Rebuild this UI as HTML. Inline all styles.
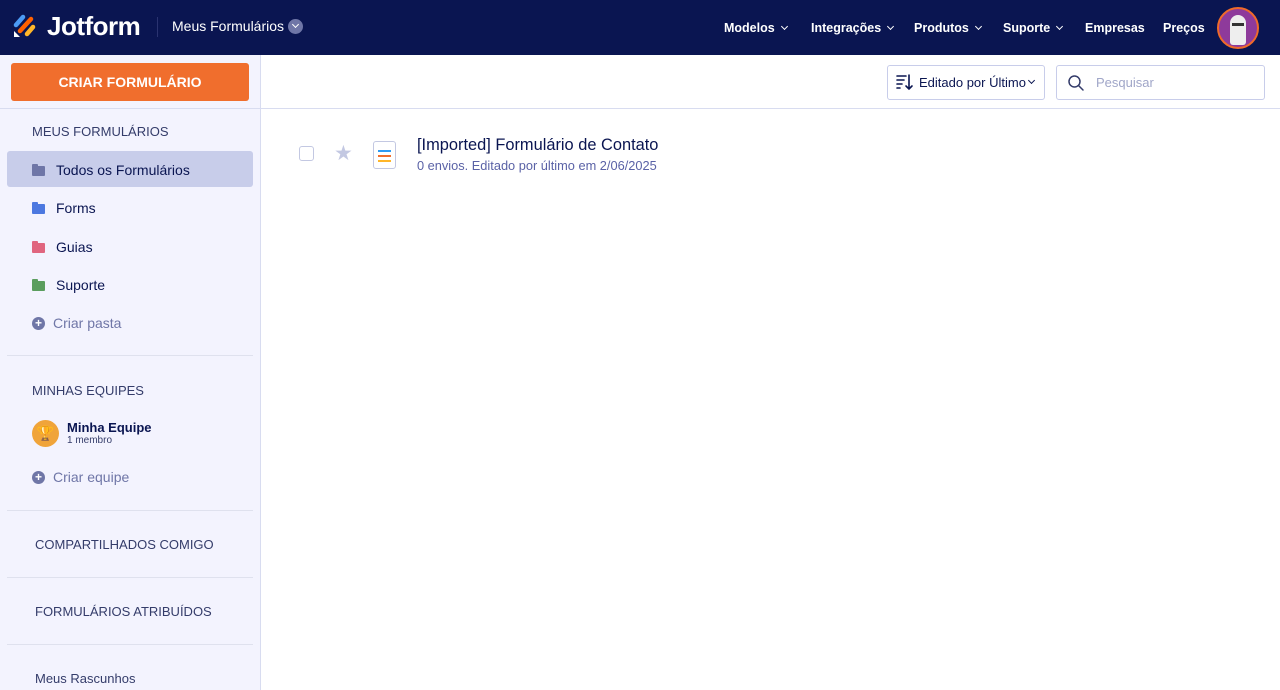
<!DOCTYPE html>
<html><head><meta charset="utf-8"><style>
*{box-sizing:border-box;margin:0;padding:0}
body{width:1280px;height:690px;overflow:hidden;font-family:"Liberation Sans",sans-serif;background:#fff;position:relative}
.hdr{position:absolute;left:0;top:0;width:1280px;height:55px;background:#0a1551}
.abs{position:absolute;white-space:nowrap}
.nav{color:#fff;font-size:12.5px;font-weight:bold;top:21px}
.chev{display:inline-block;width:5px;height:5px;border-right:1.5px solid #fff;border-bottom:1.5px solid #fff;transform:rotate(45deg);margin-left:7px;position:relative;top:-3px}
.side{position:absolute;left:0;top:55px;width:261px;height:635px;background:#f3f3fe;border-right:1px solid #d8dcf0}
.sec{color:#343c6a;font-size:13px}
.item{font-size:14px;color:#0a1551}
.fold{position:absolute;width:13px;height:10px;border-radius:1px}
.fold:before{content:"";position:absolute;left:0;top:-2px;width:6px;height:3px;background:inherit;border-radius:1px 1px 0 0}
.hr{position:absolute;left:7px;width:246px;height:1px;background:#dfe1ee}
.plus{position:absolute;width:13px;height:13px;border-radius:50%;background:#6f76a7;color:#fff;font-size:12px;line-height:13px;text-align:center;font-weight:bold}
</style></head><body>
<div class="hdr"></div>
<svg class="abs" style="left:13px;top:14px" width="24" height="24" viewBox="0 0 24 24">
<line x1="3" y1="11" x2="10" y2="3" stroke="#4c9bf5" stroke-width="4.5" stroke-linecap="round"/>
<line x1="7" y1="17" x2="18" y2="5" stroke="#ff6100" stroke-width="4.5" stroke-linecap="round"/>
<line x1="14" y1="20" x2="20" y2="13" stroke="#ffb629" stroke-width="4.5" stroke-linecap="round"/>
<path d="M1 17 L1 23 L7 23 Z" fill="#fff"/>
</svg>
<div class="abs" style="left:47px;top:11px;color:#fff;font-size:26px;font-weight:bold;letter-spacing:-0.5px">Jotform</div>
<div class="abs" style="left:157px;top:17px;width:1px;height:20px;background:#2a3370"></div>
<div class="abs" style="left:172px;top:18px;color:#fff;font-size:14px">Meus Formulários</div>
<div class="abs" style="left:288px;top:19px;width:15px;height:15px;border-radius:50%;background:#6f76a7"><span class="chev" style="position:absolute;left:5px;top:3px;width:5px;height:5px;margin:0;border-color:#fff"></span></div>
<div class="abs nav" style="left:724px">Modelos<span class="chev"></span></div>
<div class="abs nav" style="left:811px">Integrações<span class="chev"></span></div>
<div class="abs nav" style="left:914px">Produtos<span class="chev"></span></div>
<div class="abs nav" style="left:1003px">Suporte<span class="chev"></span></div>
<div class="abs nav" style="left:1085px">Empresas</div>
<div class="abs nav" style="left:1163px">Preços</div>
<div class="abs" style="left:1217px;top:7px;width:42px;height:42px;border-radius:50%;background:#8e3a9b;border:2px solid #f06a2a;overflow:hidden">
<div style="position:absolute;left:11px;top:6px;width:16px;height:30px;background:#eee;border-radius:8px 8px 3px 3px"></div>
<div style="position:absolute;left:13px;top:14px;width:12px;height:3px;background:#333"></div></div>

<div class="side"></div>
<div class="abs" style="left:11px;top:63px;width:238px;height:38px;background:#f06e2d;border-radius:3px;color:#fff;font-size:14px;font-weight:bold;text-align:center;line-height:38px">CRIAR FORMULÁRIO</div>
<div class="abs" style="left:0;top:108px;width:1280px;height:1px;background:#d8dcf0"></div>
<div class="abs sec" style="left:32px;top:124px">MEUS FORMULÁRIOS</div>
<div class="abs" style="left:7px;top:151px;width:246px;height:36px;background:#c8cdea;border-radius:3px"></div>
<div class="fold" style="left:32px;top:166px;background:#6f76a7"></div>
<div class="abs item" style="left:56px;top:162px">Todos os Formulários</div>
<div class="fold" style="left:32px;top:204px;background:#4c78e0"></div>
<div class="abs item" style="left:56px;top:200px">Forms</div>
<div class="fold" style="left:32px;top:243px;background:#e0657f"></div>
<div class="abs item" style="left:56px;top:239px">Guias</div>
<div class="fold" style="left:32px;top:281px;background:#5a9d5e"></div>
<div class="abs item" style="left:56px;top:277px">Suporte</div>
<div class="plus" style="left:32px;top:317px">+</div>
<div class="abs" style="left:53px;top:315px;font-size:14px;color:#6f76a7">Criar pasta</div>
<div class="hr" style="top:355px"></div>
<div class="abs sec" style="left:32px;top:383px">MINHAS EQUIPES</div>
<div class="abs" style="left:32px;top:420px;width:27px;height:27px;border-radius:50%;background:#f0a43a;text-align:center;font-size:14px;line-height:27px;color:#7a5210">🏆</div>
<div class="abs" style="left:67px;top:420px;font-size:13px;font-weight:bold;color:#0a1551">Minha Equipe</div>
<div class="abs" style="left:67px;top:435px;font-size:10px;color:#343c6a">1 membro</div>
<div class="plus" style="left:32px;top:471px">+</div>
<div class="abs" style="left:53px;top:469px;font-size:14px;color:#6f76a7">Criar equipe</div>
<div class="hr" style="top:510px"></div>
<div class="abs sec" style="left:35px;top:537px">COMPARTILHADOS COMIGO</div>
<div class="hr" style="top:577px"></div>
<div class="abs sec" style="left:35px;top:604px">FORMULÁRIOS ATRIBUÍDOS</div>
<div class="hr" style="top:644px"></div>
<div class="abs sec" style="left:35px;top:671px">Meus Rascunhos</div>

<div class="abs" style="left:887px;top:65px;width:158px;height:35px;border:1px solid #c8cdea;border-radius:3px"></div>
<svg class="abs" style="left:896px;top:73px" width="18" height="18" viewBox="0 0 18 18" fill="none" stroke="#0a1551" stroke-width="1.6" stroke-linecap="round"><path d="M1 3h9M1 7h7M1 11h5M1 15h3M13 2v14M10 13l3 3 3-3"/></svg>
<div class="abs" style="left:919px;top:75px;font-size:13px;color:#0a1551">Editado por Último</div>
<div style="position:absolute;left:1029px;top:78px;width:5px;height:5px;border-right:1.5px solid #0a1551;border-bottom:1.5px solid #0a1551;transform:rotate(45deg)"></div>
<div class="abs" style="left:1056px;top:65px;width:209px;height:35px;border:1px solid #c8cdea;border-radius:3px"></div>
<svg class="abs" style="left:1067px;top:74px" width="18" height="18" viewBox="0 0 18 18" fill="none" stroke="#343c6a" stroke-width="1.5" stroke-linecap="round"><circle cx="7.5" cy="7.5" r="5.5"/><path d="M11.5 11.5l4.5 4.5"/></svg>
<div class="abs" style="left:1096px;top:75px;font-size:13px;color:#a0a6c8">Pesquisar</div>

<div class="abs" style="left:299px;top:146px;width:15px;height:15px;border:1.5px solid #c3c8e2;border-radius:3px"></div>
<div class="abs" style="left:334px;top:141px;font-size:21px;color:#c3c8e2">★</div>
<div class="abs" style="left:373px;top:141px;width:23px;height:28px;border:1.5px solid #c3c8e2;border-radius:3px;background:#fff"></div>
<div class="abs" style="left:378px;top:150px;width:13px;height:2px;background:#2e9bf3"></div>
<div class="abs" style="left:378px;top:155px;width:13px;height:2px;background:#f06e2d"></div>
<div class="abs" style="left:378px;top:160px;width:13px;height:2px;background:#ffb629"></div>
<div class="abs" style="left:417px;top:136px;font-size:16.4px;color:#0a1551">[Imported] Formulário de Contato</div>
<div class="abs" style="left:417px;top:158px;font-size:12.8px;color:#5a62a6">0 envios. Editado por último em 2/06/2025</div>
</body></html>
